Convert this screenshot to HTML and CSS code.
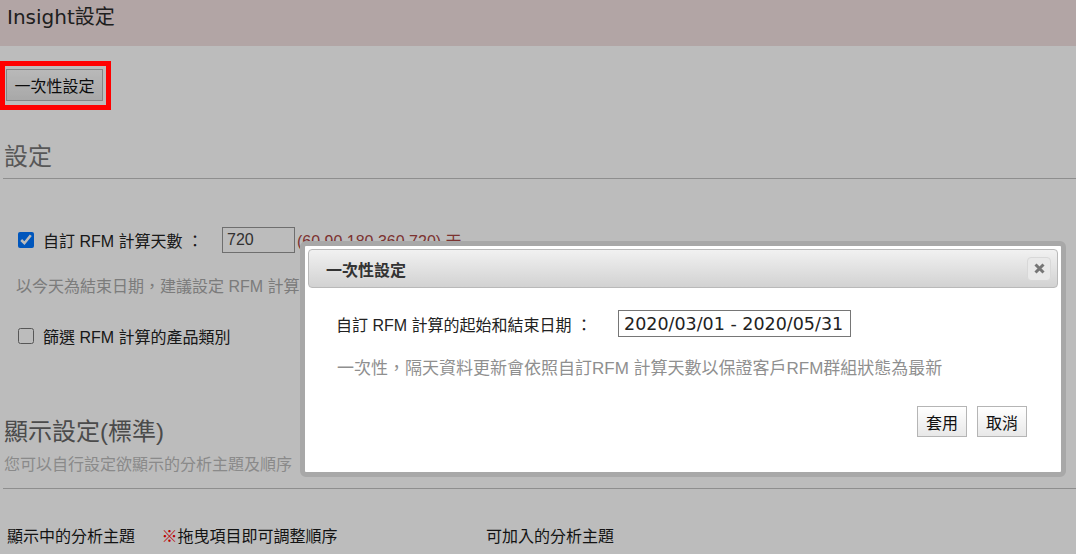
FILE: index.html
```html
<html>
  <head>
    <meta charset="UTF-8" />
    <meta name="viewport" content="width=device-width, initial-scale=1.0" />
    <title>Insight設定</title>
    <link rel="stylesheet" href="styles.css">
  </head>
  <body>
    <header class="topbar">Insight設定</header>

    <main class="content">
      <div class="toolbar">
        <button class="btn btn-once" type="button">一次性設定</button>
      </div>

      <!-- RFM 設定 -->
      <section class="block">
        <div class="block-head">
          <h2 class="block-title">設定</h2>
        </div>
        <div class="opt-row first">
          <label class="check">
            <input type="checkbox" checked />
            <span>自訂 RFM 計算天數 ：</span>
          </label>
          <input class="days" type="text" value="720" />
          <span class="days-hint">(<em>60 90 180 360 720</em>) 天</span>
        </div>
        <p class="note">以今天為結束日期，建議設定 RFM 計算天數為 360 天以上</p>
        <div class="opt-row">
          <label class="check">
            <input type="checkbox" />
            <span>篩選 RFM 計算的產品類別</span>
          </label>
        </div>
      </section>

      <!-- 顯示設定 -->
      <section class="block">
        <div class="block-head tall">
          <h2 class="block-title">顯示設定(標準)</h2>
          <p class="block-sub">您可以自行設定欲顯示的分析主題及順序</p>
        </div>
        <div class="topics">
          <div class="topic-col">
            顯示中的分析主題
            <span class="tip"><b>※</b>拖曳項目即可調整順序</span>
          </div>
          <div class="topic-col">可加入的分析主題</div>
        </div>
      </section>
    </main>

    <div class="overlay"></div>
    <div class="highlight"></div>

    <div class="dialog">
      <div class="dialog-bar">
        <span class="dialog-title">一次性設定</span>
        <button class="dialog-close" type="button">
          <svg width="11" height="11" viewBox="0 0 11 11">
            <path d="M1.5 1.5 L9.5 9.5 M9.5 1.5 L1.5 9.5" stroke="#767676" stroke-width="3" fill="none" />
          </svg>
        </button>
      </div>
      <div class="dialog-body">
        <div class="range-row">
          <span>自訂 RFM 計算的起始和結束日期 ：</span>
          <input class="range" type="text" value="2020/03/01 - 2020/05/31" />
        </div>
        <p class="range-note">一次性，隔天資料更新會依照自訂RFM 計算天數以保證客戶RFM群組狀態為最新</p>
        <div class="dialog-actions">
          <button class="btn btn-small" type="button">套用</button>
          <button class="btn btn-small" type="button">取消</button>
        </div>
      </div>
    </div>
  </body>
</html>
```

FILE: styles.css
```css
/* ページ全体 */
html,
body {
  margin: 0;
  padding: 0;
}
body {
  width: 1076px;
  height: 554px;
  overflow: hidden;
  background: #fff;
  color: #222;
  font-size: 16px;
  font-family: "Liberation Sans", "Noto Sans CJK TC", sans-serif;
}
p,
h2 {
  margin: 0;
}

/** 上部バー */
.topbar {
  box-sizing: border-box;
  height: 46px;
  padding: 4px 7px 0;
  background: #f2e0e0;
  color: #2a2a2a;
  font-size: 20px;
  line-height: 26px;
  font-family: "DejaVu Sans", "Noto Sans CJK TC", sans-serif;
}

.content {
  padding-left: 3px;
}
.toolbar {
  padding: 23px 0 0 3px;
}

/** ボタン */
.btn {
  box-sizing: border-box;
  margin: 0;
  padding: 0;
  border: 1px solid #b5b5b5;
  background: linear-gradient(to bottom, #fbfbfb, #e4e4e4);
  color: #111;
  font-size: 16px;
  font-family: "Liberation Sans", "Noto Sans CJK TC", sans-serif;
  cursor: pointer;
}
.btn-once {
  width: 97px;
  height: 32px;
}
.btn-small {
  width: 50px;
  height: 31px;
  background: linear-gradient(to bottom, #ffffff, #e8e8e8);
}

/** セクション */
.block-head {
  margin-top: 40px;
  padding: 0 0 5px 1px;
  border-bottom: 1px solid #c1c1c1;
}
.block-head.tall {
  margin-top: 67px;
  padding-bottom: 12px;
}
.block-title {
  color: #777;
  font-weight: normal;
  font-size: 24px;
  line-height: 32px;
}
.tall .block-title {
  color: #666;
}
.block-sub {
  margin-top: 6px;
  color: #bbb;
  font-size: 16px;
  line-height: 22px;
}

.opt-row {
  display: flex;
  align-items: center;
  height: 26px;
  margin-top: 24px;
  padding-left: 15px;
}
.opt-row.first {
  margin-top: 48px;
}
.check {
  display: flex;
  align-items: center;
  gap: 9px;
}
.check input {
  width: 16px;
  height: 16px;
  margin: 0;
}
.days {
  box-sizing: border-box;
  width: 73px;
  height: 26px;
  margin: 0 0 0 19px;
  padding: 0 4px;
  border: 1px solid #969696;
  color: #444;
  font-size: 16px;
  font-family: "Liberation Sans", sans-serif;
}
.days-hint {
  margin-left: 2px;
  color: #a94442;
}
.days-hint em {
  font-style: normal;
}
.note {
  margin-top: 22px;
  padding-left: 13px;
  color: #a8a8a8;
  line-height: 24px;
}

.topics {
  display: flex;
  margin-top: 36px;
  padding-left: 4px;
  color: #1a1a1a;
  line-height: 24px;
}
.topic-col:first-child {
  width: 479px;
}
.tip {
  margin-left: 22px;
}
.tip b {
  color: #f00;
  font-weight: normal;
}

/** オーバーレイ */
.overlay {
  position: fixed;
  top: 0;
  right: 0;
  bottom: 0;
  left: 0;
  background: rgba(0, 0, 0, 0.263);
}
.highlight {
  position: absolute;
  top: 61px;
  left: 0;
  box-sizing: border-box;
  width: 111px;
  height: 49px;
  border: 5px solid #ff0000;
}

/** ダイアログ */
.dialog {
  position: absolute;
  top: 241px;
  left: 300px;
  box-sizing: border-box;
  width: 766px;
  height: 236px;
  padding: 3px;
  border: 5px solid #a8a8a8;
  border-radius: 6px;
  background: #fff;
}
.dialog-bar {
  display: flex;
  align-items: center;
  justify-content: space-between;
  box-sizing: border-box;
  height: 39px;
  padding: 0 6px 0 17px;
  border: 1px solid #b9b9b9;
  border-radius: 4px;
  background: linear-gradient(to bottom, #f1f1f1, #d2d2d2);
}
.dialog-title {
  color: #333;
  font-weight: bold;
  font-size: 16px;
}
.dialog-close {
  display: flex;
  align-items: center;
  justify-content: center;
  box-sizing: border-box;
  width: 24px;
  height: 24px;
  padding: 0;
  border: 1px solid #d8d8d8;
  border-radius: 4px;
  background: #e9e9e9;
}
.dialog-body {
  padding: 22px 31px 0 25px;
}
.range-row {
  display: flex;
  align-items: center;
  gap: 26px;
  padding-left: 3px;
}
.range {
  box-sizing: border-box;
  width: 233px;
  height: 27px;
  margin: 0;
  padding: 0 5px;
  border: 1px solid #767676;
  color: #222;
  font-size: 17.5px;
  font-family: "DejaVu Sans", sans-serif;
}
.range-note {
  margin-top: 20px;
  padding-left: 4px;
  color: #8f8f8f;
  font-size: 17px;
  line-height: 24px;
}
.dialog-actions {
  display: flex;
  justify-content: flex-end;
  gap: 10px;
  margin-top: 25px;
}
```
